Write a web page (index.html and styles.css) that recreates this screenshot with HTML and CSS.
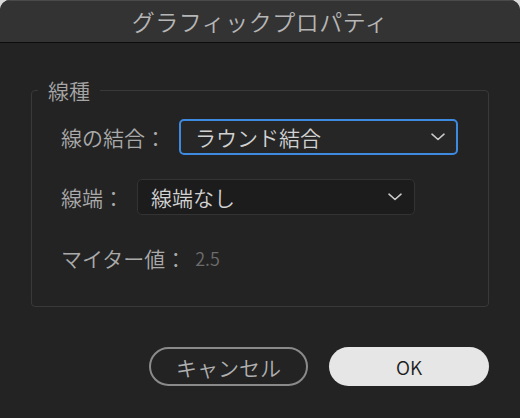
FILE: index.html
```html
<!DOCTYPE html>
<html lang="ja">
<head>
<meta charset="utf-8">
<title>グラフィックプロパティ</title>
<link rel="stylesheet" href="styles.css">
</head>
<body>
<div class="dialog">
  <div class="titlebar">グラフィックプロパティ</div>
  <div class="content">
    <fieldset class="group">
      <legend class="legend">線種</legend>
      <div class="rows">
        <div class="row">
          <span class="label">線の結合：</span>
          <div class="select select-focus">
            <span class="select-text">ラウンド結合</span>
            <svg class="chev" width="14" height="8" viewBox="0 0 14 8"><path d="M1 1.2 L7 6.5 L13 1.2" fill="none" stroke="#c9c9c9" stroke-width="1.6" stroke-linecap="round" stroke-linejoin="round"/></svg>
          </div>
        </div>
        <div class="row">
          <span class="label">線端：</span>
          <div class="select select-plain">
            <span class="select-text">線端なし</span>
            <svg class="chev" width="14" height="8" viewBox="0 0 14 8"><path d="M1 1.2 L7 6.5 L13 1.2" fill="none" stroke="#c9c9c9" stroke-width="1.6" stroke-linecap="round" stroke-linejoin="round"/></svg>
          </div>
        </div>
        <div class="row row-miter">
          <span class="label">マイター値：</span>
          <span class="value">2.5</span>
        </div>
      </div>
    </fieldset>
    <div class="buttons">
      <button class="btn btn-cancel">キャンセル</button>
      <button class="btn btn-ok">OK</button>
    </div>
  </div>
</div>
</body>
</html>
```
FILE: styles.css
```css
html, body {
  margin: 0;
  padding: 0;
  background: #d9d9d9;
}
body {
  font-family: "Noto Sans CJK JP", "Noto Sans", sans-serif;
  font-weight: 350;
}
.dialog {
  width: 520px;
  height: 418px;
  background: #232323;
  border-radius: 10px 10px 0 0;
  overflow: hidden;
  display: flex;
  flex-direction: column;
}
.titlebar {
  height: 42px;
  flex: none;
  background: #333333;
  box-shadow: inset 0 1px 0 #4a4a4a;
  border-bottom: 1px solid #0c0c0c;
  color: #b6b6b6;
  font-size: 23px;
  letter-spacing: 0.5px;
  line-height: 42px;
  text-align: center;
}
.content {
  display: flex;
  flex-direction: column;
  padding: 35px 31px 0 31px;
}
.group {
  margin: 0;
  border: 1px solid #393939;
  border-radius: 4px;
  padding: 17px 0 30px 0;
  min-width: 0;
}
.legend {
  margin-left: 6px;
  padding: 0 10px;
  font-size: 21px;
  line-height: 24px;
  color: #a6a6a6;
}
.rows {
  display: flex;
  flex-direction: column;
  gap: 24px;
  padding-left: 29px;
}
.row {
  display: flex;
  align-items: center;
  height: 36px;
}
.row-miter {
  margin-top: 1px;
}
.label {
  font-size: 21px;
  color: #aaaaaa;
  margin-right: 13px;
  line-height: 36px;
}
.select {
  box-sizing: border-box;
  height: 36px;
  width: 279px;
  border-radius: 5px;
  display: flex;
  align-items: center;
  justify-content: space-between;
}
.select-focus {
  border: 2px solid #3d8ae0;
  background: #262626;
  padding: 0 11px 0 14px;
}
.select-plain {
  width: 278px;
  border: 1px solid #333333;
  background: #1c1c1c;
  padding: 0 12px 0 13px;
}
.select-text {
  font-size: 21px;
  color: #d2d2d2;
  line-height: 32px;
}
.chev {
  display: block;
}
.value {
  font-size: 18px;
  color: #6c6c6c;
  margin-left: -4px;
}
.buttons {
  display: flex;
  justify-content: flex-end;
  gap: 21px;
  margin-top: 40px;
}
.btn {
  box-sizing: border-box;
  height: 39px;
  border-radius: 20px;
  font-family: "Noto Sans CJK JP", "Noto Sans", sans-serif;
  font-weight: 350;
  padding: 0;
  cursor: pointer;
}
.btn-cancel {
  width: 159px;
  background: transparent;
  border: 2px solid #8a8a8a;
  color: #b0b0b0;
  font-size: 21px;
}
.btn-ok {
  width: 160px;
  background: #e6e6e6;
  border: none;
  color: #1e1e1e;
  font-size: 19px;
}
```
